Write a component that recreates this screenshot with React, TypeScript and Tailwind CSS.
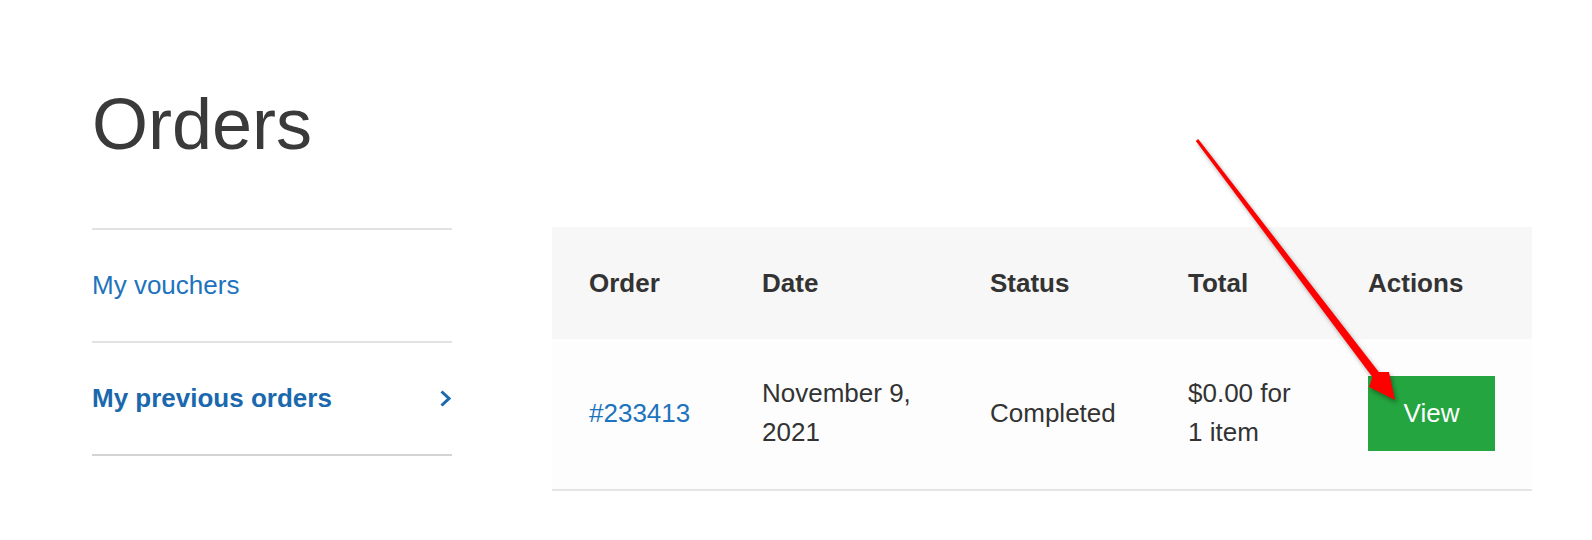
export default function App() {
  return (
    <div className="relative w-[1592px] h-[540px] bg-white overflow-hidden font-['Liberation_Sans',Arial,sans-serif] text-[#333333]">
      <div className="pl-[92px] pt-[81px]">
        <h1 className="text-[72px] leading-[86px] text-[#3a3a3a] font-normal">Orders</h1>

        <div className="flex mt-[60px] gap-[100px]">
          {/* account nav */}
          <nav className="w-[360px] mt-[1px] border-t-2 border-[#e2e2e2] text-[26px] leading-[39px]">
            <a href="#" className="block py-9 border-b-2 border-[#e2e2e2] text-[#1e73be]">
              My vouchers
            </a>
            <a href="#" className="flex items-center justify-between py-9 border-b-2 border-[#d4d4d4] text-[#1a68ad] font-bold">
              <span>My previous orders</span>
              <svg width="11" height="17" viewBox="0 0 11 17" className="mr-[1px]">
                <polyline points="1.5,1.5 9,8.5 1.5,15.5" fill="none" stroke="#1a68ad" strokeWidth="3" />
              </svg>
            </a>
          </nav>

          {/* orders table */}
          <div className="w-[980px] text-[26px] leading-[39px]">
            <div className="grid grid-cols-[173px_228px_198px_180px_201px] h-[112px] items-center bg-[#f7f7f7] font-bold text-[#333333]">
              <div className="pl-[37px]">Order</div>
              <div className="pl-[37px]">Date</div>
              <div className="pl-[37px]">Status</div>
              <div className="pl-[37px]">Total</div>
              <div className="pl-[37px]">Actions</div>
            </div>
            <div className="grid grid-cols-[173px_228px_198px_180px_201px] h-[152px] pb-[2px] items-center bg-[#fdfdfd] border-b-2 border-[#e5e5e5]">
              <div className="pl-[37px]">
                <a href="#" className="text-[#1e73be]">#233413</a>
              </div>
              <div className="pl-[37px]">
                November 9,
                <br />
                2021
              </div>
              <div className="pl-[37px]">Completed</div>
              <div className="pl-[37px]">
                $0.00 for
                <br />1 item
              </div>
              <div className="pl-[37px]">
                <button className="w-[127px] h-[75px] bg-[#24a53f] text-white text-[26px]">View</button>
              </div>
            </div>
          </div>
        </div>
      </div>

      {/* annotation arrow */}
      <svg className="absolute inset-0 pointer-events-none drop-shadow-[2px_3px_2px_rgba(0,0,0,0.35)]" width="1592" height="540" viewBox="0 0 1592 540">
        <polygon
          points="1195.8,140.9 1372.4,376.9 1369,387 1395,400 1389,372 1378.8,372.1 1198.2,139.1"
          fill="#ff0000"
        />
      </svg>
    </div>
  );
}
